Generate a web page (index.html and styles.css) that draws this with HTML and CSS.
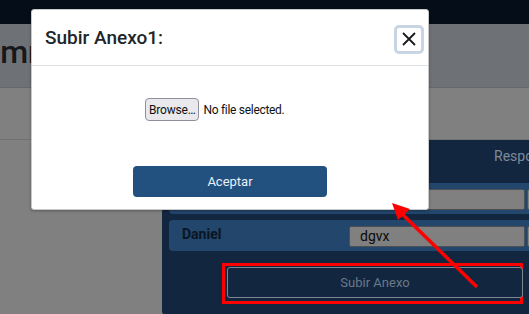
FILE: index.html
```html
<!DOCTYPE html>
<html lang="es">
<head>
    <meta charset="UTF-8">
    <meta name="viewport" content="width=device-width, initial-scale=1.0">
    <title>Subir Anexo</title>
    <link rel="stylesheet" href="styles.css">
</head>
<body>
    <div class="page">
        <header class="topbar"></header>
        <section class="title-band">
            <h1 class="page-title">Alumnos</h1>
        </section>
        <section class="filter-band"></section>
        <main class="content">
            <div class="panel">
                <div class="panel-head">
                    <span class="col-label">Respondido</span>
                </div>
                <div class="row">
                    <span class="name"></span>
                    <div class="field"></div>
                    <div class="field"></div>
                </div>
                <div class="row">
                    <span class="name">Daniel</span>
                    <div class="field">dgvx</div>
                    <div class="field"></div>
                </div>
                <div class="upload-wrap">
                    <button class="upload-btn">Subir Anexo</button>
                </div>
            </div>
        </main>

        <svg class="arrow" width="529" height="314" viewBox="0 0 529 314">
            <line x1="477" y1="287" x2="400" y2="212" stroke="#ff0000" stroke-width="3.5"/>
            <polygon points="392,203 410,209 398,220" fill="#ff0000"/>
        </svg>
    </div>

    <div class="modal">
        <div class="modal-header">
            <h2 class="modal-title">Subir Anexo1:</h2>
            <button class="close-btn" aria-label="Cerrar">
                <svg width="16" height="16" viewBox="0 0 16 16">
                    <path d="M2 2 L14 14 M14 2 L2 14" stroke="#1a1a1a" stroke-width="1.8" fill="none"/>
                </svg>
            </button>
        </div>
        <div class="modal-body">
            <div class="file-input">
                <button class="browse-btn">Browse…</button>
                <span class="file-name">No file selected.</span>
            </div>
            <button class="accept-btn">Aceptar</button>
        </div>
    </div>
</body>
</html>
```

FILE: styles.css
```css
* {
    box-sizing: border-box;
}

body {
    margin: 0;
    font-family: Roboto, "Liberation Sans", sans-serif;
    background-color: #808080;
    width: 529px;
    height: 314px;
    overflow: hidden;
    position: relative;
}

.page {
    position: relative;
    height: 314px;
}

.topbar {
    height: 24px;
    background-color: #050d18;
}

.title-band {
    height: 64px;
    background-color: #6e7175;
    border-bottom: 1px solid #66686b;
    overflow: hidden;
}

.page-title {
    margin: 0;
    padding-top: 9px;
    font-size: 32px;
    font-weight: 500;
    color: #16181b;
    text-indent: -47px;
    white-space: nowrap;
}

.filter-band {
    height: 52px;
    border-bottom: 1px solid #727272;
}

.content {
    padding-left: 162px;
}

.panel {
    width: 420px;
    height: 175px;
    background-color: #12263f;
    border-radius: 0 0 0 4px;
    padding-left: 7px;
}

.panel-head {
    height: 43px;
    padding: 8px 0 0 325px;
    font-size: 14px;
    color: #7d8a99;
    white-space: nowrap;
}

.row {
    display: flex;
    align-items: flex-start;
    height: 31px;
    margin-bottom: 6px;
    padding: 6px 0 0 13px;
    background-color: #22466c;
    border-radius: 4px;
}

.name {
    flex-shrink: 0;
    width: 167px;
    font-size: 14px;
    font-weight: 700;
    color: #0b1522;
}

.field {
    flex-shrink: 0;
    width: 176px;
    height: 21px;
    margin-right: 2px;
    padding: 1px 0 0 10px;
    background-color: #808080;
    border: 1px solid #4d4f52;
    border-radius: 2px;
    font-size: 14px;
    color: #0b0b0b;
}

.upload-wrap {
    width: 301px;
    height: 41px;
    margin: 12px 0 0 53px;
    padding: 1px 0 0 2px;
    border: 3px solid #ff0000;
}

.upload-btn {
    width: 296px;
    height: 31px;
    background-color: #12263f;
    border: 1px solid #7d8793;
    border-radius: 3px;
    font-family: Roboto, sans-serif;
    font-size: 13px;
    color: #6b7888;
}

.arrow {
    position: absolute;
    top: 0;
    left: 0;
    z-index: 3;
}

.modal {
    position: absolute;
    top: 9px;
    left: 31px;
    width: 398px;
    height: 201px;
    background-color: #fff;
    border: 1px solid #c9c9c9;
    border-radius: 3px;
    box-shadow: 0 1px 3px rgba(0, 0, 0, 0.3);
    z-index: 2;
}

.modal-header {
    display: flex;
    align-items: center;
    justify-content: space-between;
    height: 56px;
    padding: 0 4px 0 13px;
    border-bottom: 1px solid #dee2e6;
}

.modal-title {
    margin: 0;
    font-size: 19px;
    font-weight: 500;
    color: #212529;
}

.close-btn {
    display: flex;
    align-items: center;
    justify-content: center;
    width: 30px;
    height: 29px;
    margin-top: 3px;
    padding: 0;
    background: #fff;
    border: 3px solid #c8d6e4;
    border-radius: 5px;
}

.modal-body {
    display: flex;
    flex-direction: column;
    align-items: center;
}

.file-input {
    display: flex;
    align-items: center;
    gap: 4px;
    align-self: flex-start;
    margin: 32px 0 0 113px;
}

.browse-btn {
    height: 23px;
    padding: 0 3px;
    background-color: #e9e9ed;
    border: 1px solid #8f8f9d;
    border-radius: 4px;
    font-family: Roboto, sans-serif;
    font-size: 12px;
    letter-spacing: -0.2px;
    color: #111;
}

.file-name {
    font-size: 12px;
    letter-spacing: -0.3px;
    color: #111;
}

.accept-btn {
    width: 194px;
    height: 31px;
    margin-top: 45px;
    background-color: #23517f;
    border: none;
    border-radius: 4px;
    font-family: Roboto, sans-serif;
    font-size: 13px;
    color: #e8f0f8;
}
```
